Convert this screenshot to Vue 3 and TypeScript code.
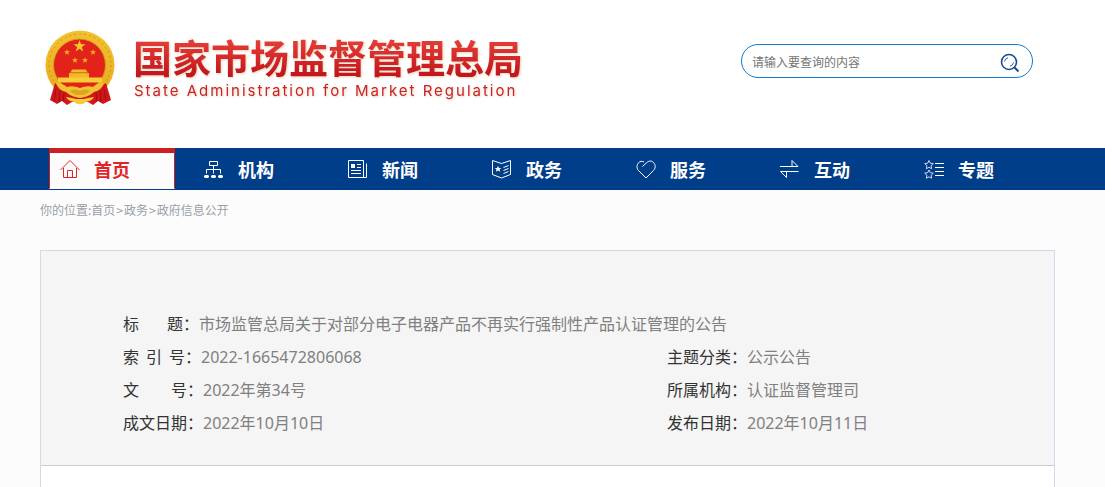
<script setup lang="ts">
import { ref } from 'vue'

interface NavItem {
  label: string
  icon: string
  active?: boolean
}

interface MetaItem {
  label: string[]
  value: string
  size: string
  wide?: boolean
}

const keyword = ref('')

const navItems: NavItem[] = [
  { label: '首页', icon: 'home', active: true },
  { label: '机构', icon: 'org' },
  { label: '新闻', icon: 'news' },
  { label: '政务', icon: 'gov' },
  { label: '服务', icon: 'heart' },
  { label: '互动', icon: 'swap' },
  { label: '专题', icon: 'topic' },
]

const metaItems: MetaItem[] = [
  {
    label: ['标', '题：'],
    value: '市场监管总局关于对部分电子电器产品不再实行强制性产品认证管理的公告',
    size: 'narrow',
    wide: true,
  },
  { label: ['索', '引', '号：'], value: '2022-1665472806068', size: 'middle' },
  { label: ['主题分类：'], value: '公示公告', size: 'full' },
  { label: ['文', '号：'], value: '2022年第34号', size: 'full' },
  { label: ['所属机构：'], value: '认证监督管理司', size: 'full' },
  { label: ['成文日期：'], value: '2022年10月10日', size: 'full' },
  { label: ['发布日期：'], value: '2022年10月11日', size: 'full' },
]
</script>

<template>
  <div class="page">
    <header class="header">
      <a class="brand" href="#">
        <svg class="emblem" viewBox="0 0 70 76" aria-hidden="true">
          <defs>
            <linearGradient id="gold" x1="0" y1="0" x2="0" y2="1">
              <stop offset="0" stop-color="#f2c230" />
              <stop offset="1" stop-color="#e9a91e" />
            </linearGradient>
          </defs>
          <circle cx="35" cy="35" r="34.500" fill="url(#gold)" />
          <circle cx="35" cy="35" r="31" fill="none" stroke="#cf8f18" stroke-width="1" stroke-dasharray="2 3" />
          <circle cx="34.500" cy="35" r="26" fill="#e32219" stroke="#d59a1c" />
          <path d="M34.500 10l1.500 4.300h4.500l-3.600 2.700 1.300 4.400-3.700-2.600-3.700 2.600 1.300-4.400-3.600-2.700h4.500z" fill="#f8c82c" />
          <g fill="#eead27">
            <path id="small-star" d="M22 19.200l.8 2.100h2.200l-1.700 1.400.6 2.200-1.900-1.300-1.900 1.300.6-2.200-1.700-1.400h2.200z" />
            <use href="#small-star" x="26" />
            <use href="#small-star" x="8" y="8" />
            <use href="#small-star" x="18" y="8" />
          </g>
          <path d="M27 39.500h14l1.500 3h-17zM24 43h20v5h-20z" fill="#f2b92a" />
          <path d="M13 47.500h44v5h-44z" fill="#f8ce36" />
          <path d="M25 43h18" stroke="#d98a18" stroke-width=".7" />
          <path d="M10 53 L5 70 L12 74 L17 71 L22 75 L27 72 H43 L48 75 L53 71 L58 74 L66 70 L61 53 L50 60 H20Z" fill="#d0161a" />
          <path d="M11 59L9 71M15 61L14 72M19 63L18 71M59 59L61 71M55 61L56 72M51 63L52 71" stroke="#98100f" stroke-width="1" fill="none" />
          <path d="M11 53Q17 53 22 57Q28 55 35 58Q42 55 48 57Q53 53 59 53Q57 60 49 62Q44 67 35 68Q26 67 21 62Q13 60 11 53Z" fill="#f3c232" />
          <path d="M25 61Q30 58 35 61Q40 58 45 61Q41 65 35 65Q29 65 25 61Z" fill="#e0a223" />
          <path d="M21 67Q28 68 31 69H39Q42 68 49 67Q47 71 41 72L38 74H32L29 72Q23 71 21 67Z" fill="#f6cb3a" />
        </svg>
        <span class="brand-text">
          <span class="brand-name">国家市场监督管理总局</span>
          <span class="brand-sub">State Administration for Market Regulation</span>
        </span>
      </a>

      <form class="search" role="search" @submit.prevent>
        <input v-model="keyword" type="text" placeholder="请输入要查询的内容" aria-label="请输入要查询的内容" />
        <button type="submit" aria-label="搜索">
          <svg width="20" height="20" viewBox="0 0 20 20" fill="none" stroke="#174c94">
            <circle cx="9" cy="9" r="7.500" stroke-width="1.600" />
            <path d="M14 14l4.500 4.500" stroke-width="2" />
            <path d="M4.500 8.500Q5 5.500 8 4.800M13.500 9.500Q13 12.500 10 13.200" stroke-width=".9" />
          </svg>
        </button>
      </form>
    </header>

    <nav class="nav">
      <ul>
        <li v-for="item in navItems" :key="item.label">
          <a href="#" :class="{ active: item.active }">
            <svg class="icon" width="20" height="20" viewBox="0 0 20 20" aria-hidden="true">
              <template v-if="item.icon === 'home'">
                <path d="M.5 11L10 1.500 19.500 11M3.500 9V18.500H16.500V9M7.500 18.500V11.500H12.500V18.500" />
              </template>
              <template v-else-if="item.icon === 'org'">
                <path d="M5.500 2.500h8v4h-8zM9.500 6.500V14.500M2.500 14.500V10.500H16.500V14.500" />
                <path class="solid" d="M1 16h3l1 1v1l-1 1h-3l-1-1v-1zM8 16h3l1 1v1l-1 1h-3l-1-1v-1zM15 16h3l1 1v1l-1 1h-3l-1-1v-1z" />
              </template>
              <template v-else-if="item.icon === 'news'">
                <path d="M15.500 15.500V1.500H.5V18.500H18.500V4.500M15.500 15V18.500M9 5.500h4M9 8.500h4M3 11.500h10M3 14.500h10" />
                <path class="solid" d="M3 5h4v4h-4z" />
              </template>
              <template v-else-if="item.icon === 'gov'">
                <path d="M.5 1.500L9.500 4.500 18.500 1.500V15.500L9.500 19 .5 15.500ZM11.500 8.500l5-2M11.500 11.500l5-2M11.500 14.500l5-2" />
                <path class="solid" d="M6 7l1 2h2.200l-1.700 1.500.6 2.200L6 11.500l-2.100 1.200.6-2.200L2.800 9H5z" />
              </template>
              <template v-else-if="item.icon === 'heart'">
                <path d="M6.500 7.500L10.500 3.800C13 1.500 15.500 1.500 17.500 3.500C20 6 19.500 9.500 17.500 11.500L10 19L2.500 11.500C.5 9.500 .5 6 2.500 3.800C4 2 6.500 2 8 3" />
              </template>
              <template v-else-if="item.icon === 'swap'">
                <path d="M0 7.500H18L12 1.500V7M18.500 12.500H.5L6.500 18.500V13" />
              </template>
              <template v-else>
                <path class="thin" d="M5 1.500l1.300 2.700 3 .4-2.200 2.100.5 3L5 8.300 2.400 9.700l.5-3L.7 4.600l3-.4zM5 11l1.300 2.700 3 .4-2.200 2.100.5 3L5 17.800l-2.600 1.400.5-3-2.200-2.100 3-.4z" />
                <path d="M11 4.500h9M11 8.500h9M11 12.500h9M11 16.500h9" />
              </template>
            </svg>
            <span>{{ item.label }}</span>
          </a>
        </li>
      </ul>
    </nav>

    <div class="crumbs">
      你的位置:<a href="#">首页</a><span class="sep">&gt;</span><a href="#">政务</a><span class="sep">&gt;</span><a href="#">政府信息公开</a>
    </div>

    <main class="panel">
      <dl class="meta">
        <div v-for="item in metaItems" :key="item.label.join('')" class="meta-item" :class="{ wide: item.wide }">
          <dt :class="item.size">
            <span v-for="part in item.label" :key="part">{{ part }}</span>
          </dt>
          <dd>{{ item.value }}</dd>
        </div>
      </dl>
    </main>
  </div>
</template>

<style>
body {
  margin: 0;
  background: #fcfcfc;
}
</style>

<style scoped>
.page {
  display: flex;
  flex-direction: column;
  min-height: 100vh;
  font-family: "Noto Sans", "Noto Sans CJK SC", sans-serif;
  font-size: 16px;
  color: #333;
}

a {
  color: inherit;
  text-decoration: none;
}

.header {
  box-sizing: border-box;
  display: flex;
  align-items: flex-start;
  justify-content: space-between;
  height: 148px;
  padding: 30px 72px 0 45px;
  background: #fff;
}

.brand {
  display: flex;
  gap: 18px;
}

.emblem {
  width: 70px;
  height: 76px;
}

.brand-text {
  display: flex;
  flex-direction: column;
  filter: drop-shadow(1px 1px 1px #e6d3b8);
  white-space: nowrap;
}

.brand-name {
  font-family: "Noto Sans CJK SC", sans-serif;
  font-size: 39px;
  font-weight: 700;
  line-height: 52px;
  color: transparent;
  background: linear-gradient(#e23a36 25%, #c4161c 85%);
  background-clip: text;
}

.brand-sub {
  padding-left: 1px;
  font-family: Inter, sans-serif;
  font-size: 15px;
  font-weight: 400;
  line-height: 18px;
  letter-spacing: 2px;
  color: #cc2226;
}

.search {
  box-sizing: border-box;
  display: flex;
  align-items: center;
  width: 292px;
  height: 34px;
  margin-top: 14px;
  padding: 0 12px 0 10px;
  border: 1px solid #1279cb;
  border-radius: 17px;
  background: #fff;
}

.search input {
  flex: 1;
  min-width: 0;
  padding: 0;
  border: 0;
  outline: 0;
  background: none;
  font-family: "Noto Sans CJK SC", sans-serif;
  font-size: 12px;
  color: #333;
}

.search input::placeholder {
  color: #757575;
}

.search button {
  display: flex;
  padding: 4px 0 0;
  border: 0;
  background: none;
}

.nav {
  height: 42px;
  padding: 0 48px 0 49px;
  background: #003e89;
}

.nav ul {
  display: grid;
  grid-template-columns: repeat(7, 1fr);
  margin: 0;
  padding: 0;
  list-style: none;
}

.nav a {
  box-sizing: border-box;
  display: flex;
  align-items: center;
  gap: 14px;
  height: 41px;
  margin-right: 18px;
  padding: 0 0 3px 10px;
  border: 1px solid transparent;
  border-top-width: 5px;
  font-family: "Noto Sans CJK SC", sans-serif;
  font-size: 18px;
  font-weight: 700;
  line-height: 24px;
  white-space: nowrap;
  color: #fff;
}

.nav a.active {
  border-color: #cc1f20;
  border-bottom-color: #fcfcfc;
  background: #fcfcfc;
  color: #e32427;
}

.icon {
  flex: none;
  fill: none;
  stroke: currentColor;
  stroke-width: 1;
}

.icon .solid {
  fill: currentColor;
  stroke: none;
}

.icon .thin {
  stroke-width: .8;
}

.crumbs {
  padding: 10px 50px 0 40px;
  font-family: "Noto Sans CJK SC", sans-serif;
  font-size: 12px;
  line-height: 20px;
  color: #9a9fa8;
}

.sep {
  padding: 0 1px;
}

.panel {
  flex: 1;
  margin: 30px 50px 0 40px;
  border: 1px solid #d0dbea;
  border-bottom: 0;
  background: #fff;
}

.meta {
  display: grid;
  grid-template-columns: 544px 1fr;
  margin: 0;
  padding: 57px 24px 25px 82px;
  border-bottom: 1px solid #ccc;
  background: #f5f5f5;
  line-height: 33px;
}

.meta-item {
  display: flex;
}

.meta-item.wide {
  grid-column: 1 / -1;
}

dt {
  display: flex;
  flex: none;
  justify-content: space-between;
  color: #333;
}

dt.narrow {
  width: 76px;
}

dt.middle {
  width: 78px;
}

dt.full {
  width: 80px;
}

dd {
  margin: 0;
  color: #808080;
}
</style>
